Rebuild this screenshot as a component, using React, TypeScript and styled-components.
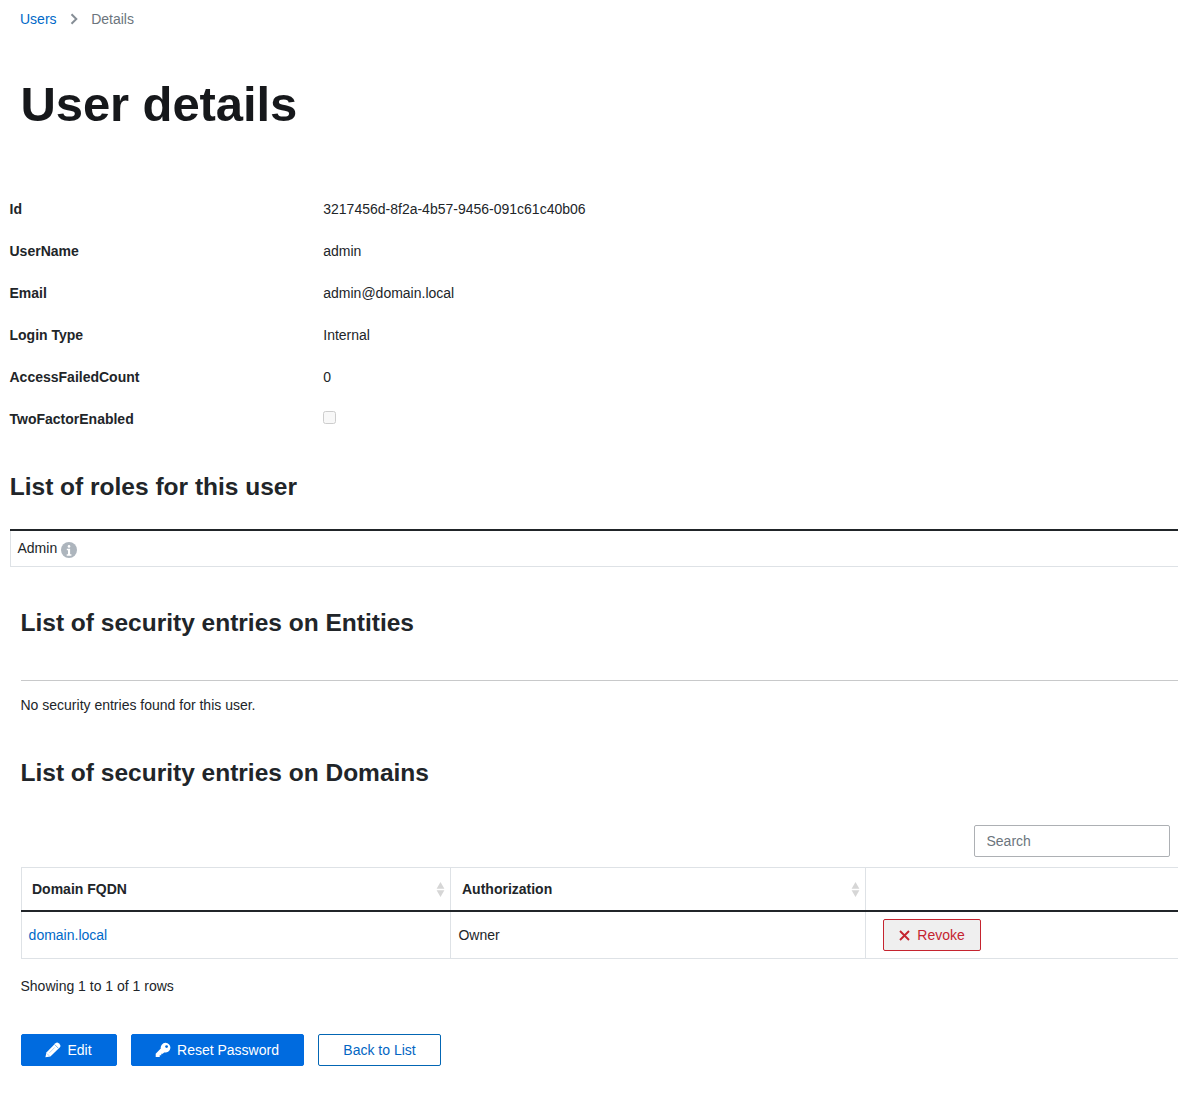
import React from 'react';
import styled, { createGlobalStyle } from 'styled-components';

const GlobalStyle = createGlobalStyle`
  *, *::before, *::after { box-sizing: border-box; }
  html { font-size: 14px; }
  body {
    margin: 0;
    overflow: hidden;
    background: #fff;
    color: #212529;
    font-family: "Liberation Sans", Arial, sans-serif;
    font-size: 14px;
    line-height: 21px;
  }
`;

const Page = styled.main`
  display: flex;
  flex-direction: column;
  height: 1104px;
  overflow: hidden;
`;

const Breadcrumb = styled.nav`
  display: flex;
  align-items: center;
  height: 21px;
  margin-top: 9px;
  padding-left: 20px;
  color: #6c757d;
`;

const Chevron = styled.svg`
  width: 8px;
  height: 12px;
  margin: -1px 13.6px 0 13px;
  fill: none;
  stroke: #868e96;
  stroke-width: 2;
`;

const Link = styled.a`
  color: #0069c8;
  text-decoration: none;
`;

const Title = styled.h1`
  margin: 44px 0 0 20.5px;
  font-size: 49px;
  line-height: 60px;
  font-weight: 700;
  letter-spacing: -0.1px;
  color: #16181b;
`;

const Details = styled.dl`
  display: grid;
  grid-template-columns: 313.75px 1fr;
  row-gap: 21px;
  margin: 65px 0 0;
  padding-left: 9.5px;
`;

const Term = styled.dt`
  font-weight: 700;
`;

const Value = styled.dd`
  display: flex;
  margin: 0;
`;

const Checkbox = styled.input`
  appearance: none;
  width: 13px;
  height: 13px;
  margin: 2px 0 0;
  border: 1px solid #cdcdcd;
  border-radius: 2.5px;
  background: #f8f8f8;
`;

const SectionTitle = styled.h2<{ $top: number; $left: number }>`
  margin: ${(p) => p.$top}px 0 0 ${(p) => p.$left}px;
  font-size: 24.5px;
  line-height: 29px;
  font-weight: 700;
`;

const Roles = styled.div`
  margin: 28px 0 0 10px;
  border-top: 2px solid #212529;
`;

const Role = styled.div`
  display: flex;
  align-items: flex-start;
  height: 36px;
  padding: 7px 6.5px;
  border: solid #dee2e6;
  border-width: 0 0 1px 1px;
`;

const InfoIcon = styled.svg`
  width: 16px;
  height: 16px;
  margin: 4px 0 0 3.6px;
`;

const Rule = styled.hr`
  width: 100%;
  height: 1px;
  margin: 43px 0 0 21px;
  border: 0;
  background: #c8c9ca;
`;

const Note = styled.p<{ $top: number }>`
  margin: ${(p) => p.$top}px 0 0 20.5px;
`;

const Toolbar = styled.div`
  display: flex;
  justify-content: flex-end;
  margin-top: 38px;
  padding-right: 8px;
`;

const Search = styled.input`
  width: 196px;
  height: 32px;
  padding: 0 11.5px;
  border: 1px solid #adb0b4;
  border-radius: 2px;
  background: #fff;
  font: inherit;

  &::placeholder {
    color: #6c757d;
    opacity: 1;
  }
`;

const Table = styled.div`
  display: grid;
  grid-template-columns: 430px 415px 1fr;
  margin: 10px 0 0 21px;
  border-top: 1px solid #dee2e6;
`;

const HeadCell = styled.div<{ $first?: boolean; $last?: boolean }>`
  display: flex;
  align-items: center;
  justify-content: space-between;
  height: 42px;
  padding: 1px 5px 0 ${(p) => (p.$first ? 10 : 11)}px;
  border: solid #dee2e6;
  border-width: 0 ${(p) => (p.$last ? 0 : 1)}px 0 ${(p) => (p.$first ? 1 : 0)}px;
  font-weight: 700;
`;

const HeadLine = styled.div`
  grid-column: 1 / -1;
  height: 2px;
  background: #212529;
`;

const Cell = styled.div<{ $first?: boolean; $last?: boolean }>`
  display: flex;
  align-items: center;
  height: 47px;
  padding-left: ${(p) => (p.$last ? 17 : p.$first ? 6.6 : 7.4)}px;
  border: solid #dee2e6;
  border-width: 0 ${(p) => (p.$last ? 0 : 1)}px 1px ${(p) => (p.$first ? 1 : 0)}px;
`;

const SortIcon = styled.svg`
  width: 9px;
  height: 15px;
  margin-top: -1px;
  fill: #d6d6d6;
`;

type Variant = 'primary' | 'outline' | 'danger';

const looks: Record<Variant, [string, string, string]> = {
  primary: ['#fff', '#006bdf', '#006bdf'],
  outline: ['#0366c3', '#fff', '#0366b4'],
  danger: ['#c5242f', '#efefef', '#c5242f'],
};

const Button = styled.button<{ $look: Variant; $width: number }>`
  display: inline-flex;
  align-items: center;
  justify-content: center;
  gap: 6px;
  width: ${(p) => p.$width}px;
  height: 32px;
  padding: 0 ${(p) => (p.$look === 'outline' ? 0 : 1)}px 0 0;
  color: ${(p) => looks[p.$look][0]};
  background: ${(p) => looks[p.$look][1]};
  border: 1px solid ${(p) => looks[p.$look][2]};
  border-radius: 2px;
  font: inherit;
`;

const Glyph = styled.svg<{ $size: number }>`
  flex: none;
  width: ${(p) => p.$size}px;
  height: ${(p) => p.$size}px;
`;

const Actions = styled.div`
  display: flex;
  gap: 14px;
  margin: 37px 0 0 21px;
`;

const details: [string, string][] = [
  ['Id', '3217456d-8f2a-4b57-9456-091c61c40b06'],
  ['UserName', 'admin'],
  ['Email', 'admin@domain.local'],
  ['Login Type', 'Internal'],
  ['AccessFailedCount', '0'],
];

const Sort = () => (
  <SortIcon viewBox="0 0 9 15" aria-hidden="true">
    <path d="M4.5 0 8.4 6.8H.6zM4.5 15 .6 8.2h7.8z" />
  </SortIcon>
);

const Info = () => (
  <InfoIcon viewBox="0 0 16 16" aria-hidden="true">
    <circle cx="8" cy="8" r="8" fill="#adb5bd" />
    <circle cx="8" cy="4.4" r="1.3" fill="#fff" />
    <path d="M5.8 6.8h3.3v5.4h1.3v1.5H5.7v-1.5H7V8.3H5.8z" fill="#fff" />
  </InfoIcon>
);

const Pencil = () => (
  <Glyph $size={16} viewBox="0 0 16 16" aria-hidden="true">
    <path
      d="M.4 15.2 1.4 10.4 10.5 1.3a2.3 2.3 0 0 1 3.2 0l1 1a2.3 2.3 0 0 1 0 3.2L5.4 14.4z"
      fill="#fff"
    />
    <path d="M9.8 2.7 13.2 6.1" fill="none" stroke="#006bdf" strokeWidth=".7" strokeOpacity=".75" />
    <path d="M4.4 10.8 9.8 5.4M2 11.6l2.6 2.6" fill="none" stroke="#006bdf" strokeWidth=".6" strokeOpacity=".5" />
  </Glyph>
);

const Key = () => (
  <Glyph $size={16} viewBox="0 0 16 16" aria-hidden="true">
    <path
      d="M10.4.8a4.9 4.9 0 1 1-1.3 9.6L7.8 11.7H6.3v1.6H4.7v1.6H.7v-3.2L5.8 6.6A4.9 4.9 0 0 1 10.4.8z"
      fill="#fff"
    />
    <circle cx="11.6" cy="4.6" r="1.4" fill="#006bdf" />
  </Glyph>
);

const Cross = () => (
  <Glyph $size={13} viewBox="0 0 13 13" aria-hidden="true">
    <path d="m2 2 9 9M11 2l-9 9" fill="none" stroke="currentColor" strokeWidth="1.9" />
  </Glyph>
);

export default function App() {
  return (
    <Page>
      <GlobalStyle />
      <Breadcrumb>
        <Link>Users</Link>
        <Chevron viewBox="0 0 8 12" aria-hidden="true">
          <path d="M1.5 1.2 6.3 6 1.5 10.8" />
        </Chevron>
        <span>Details</span>
      </Breadcrumb>
      <Title>User details</Title>
      <Details>
        {details.map(([term, value]) => (
          <React.Fragment key={term}>
            <Term>{term}</Term>
            <Value>{value}</Value>
          </React.Fragment>
        ))}
        <Term>TwoFactorEnabled</Term>
        <Value>
          <Checkbox type="checkbox" disabled aria-label="TwoFactorEnabled" />
        </Value>
      </Details>

      <SectionTitle $top={42} $left={9.75}>List of roles for this user</SectionTitle>
      <Roles>
        <Role>
          Admin
          <Info />
        </Role>
      </Roles>

      <SectionTitle $top={41} $left={20.5}>List of security entries on Entities</SectionTitle>
      <Rule />
      <Note $top={14}>No security entries found for this user.</Note>

      <SectionTitle $top={42} $left={20.5}>List of security entries on Domains</SectionTitle>
      <Toolbar>
        <Search placeholder="Search" />
      </Toolbar>
      <Table>
        <HeadCell $first>Domain FQDN<Sort /></HeadCell>
        <HeadCell>Authorization<Sort /></HeadCell>
        <HeadCell $last />
        <HeadLine />
        <Cell $first><Link>domain.local</Link></Cell>
        <Cell>Owner</Cell>
        <Cell $last>
          <Button $look="danger" $width={98}>
            <Cross />
            Revoke
          </Button>
        </Cell>
      </Table>
      <Note $top={17}>Showing 1 to 1 of 1 rows</Note>

      <Actions>
        <Button $look="primary" $width={96}>
          <Pencil />
          Edit
        </Button>
        <Button $look="primary" $width={173}>
          <Key />
          Reset Password
        </Button>
        <Button $look="outline" $width={123}>Back to List</Button>
      </Actions>
    </Page>
  );
}
